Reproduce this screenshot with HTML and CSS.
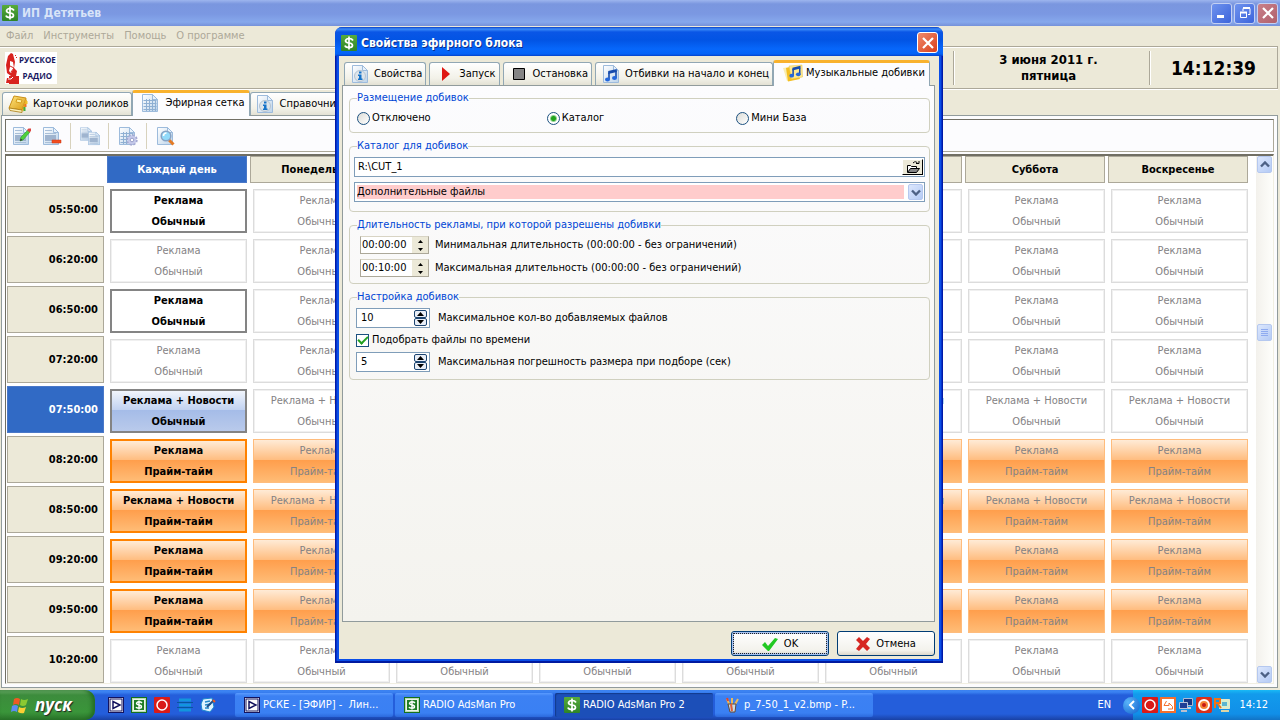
FILE: index.html
```html
<!DOCTYPE html>
<html lang="ru">
<head>
<meta charset="utf-8">
<title>ИП Детятьев</title>
<link rel="stylesheet" href="styles.css">
</head>
<body>
<svg class="sprite" aria-hidden="true">
  <defs>
    <linearGradient id="g-page" x1="0" y1="0" x2="1" y2="1"><stop offset="0" stop-color="#fff"/><stop offset="1" stop-color="#bcd3ea"/></linearGradient>
    <linearGradient id="g-green" x1="0" y1="0" x2="0" y2="1"><stop offset="0" stop-color="#58ab3b"/><stop offset="1" stop-color="#2d8427"/></linearGradient>
    <linearGradient id="g-gold" x1="0" y1="0" x2="1" y2="1"><stop offset="0" stop-color="#ffe680"/><stop offset="1" stop-color="#d99a12"/></linearGradient>
  </defs>
  <symbol id="dollar" viewBox="0 0 16 16"><rect width="16" height="16" rx="1" fill="url(#g-green)"/><path d="M12 5.500Q11 3.500 8 3.500T4.500 5.800Q4.500 7.700 8 8t3.500 2.500Q11.500 12.500 8 12.500T4 10.500M8 1.500v13" fill="none" stroke="#fff" stroke-width="1.700"/></symbol>
  <symbol id="dollar-old" viewBox="0 0 16 16"><rect width="16" height="16" fill="#16701c"/><rect x="1.500" y="1.500" width="13" height="13" fill="#e9f5e6" stroke="#b9dab5"/><rect x="3" y="3" width="10" height="10" fill="#1f7d25"/><path d="M11 6Q10 4.800 8 4.800T5.500 6.300Q5.500 7.600 8 8t2.500 1.700Q10.500 11.200 8 11.200T5 10M8 3.500v9" fill="none" stroke="#fff" stroke-width="1.400"/></symbol>
  <symbol id="page" viewBox="0 0 16 18"><path d="M.5.500h10l5 5v12H.500z" fill="url(#g-page)" stroke="#9dbbdc"/><path d="M10.500.500v5h5z" fill="#e9f2fb" stroke="#9dbbdc"/></symbol>
  <symbol id="info" viewBox="0 0 16 18"><use href="#page" width="16" height="18"/><circle cx="8" cy="11" r="5.500" fill="#dde4ea" stroke="#b5c3d0"/><path d="M7 6.500h2.500v2H7zM6 9.500h3.500v4h1v1.500H6v-1.500h1V11H6z" fill="#1673c9"/></symbol>
  <symbol id="grid" viewBox="0 0 16 18"><use href="#page" width="16" height="18"/><path d="M1.500 6.500h13M1.500 9.500h13M1.500 12.500h13M1.500 15.500h13M4.500 5v12M7.500 5v12M10.500 5v12M13.500 7v10" stroke="#8fb0d3"/></symbol>
  <symbol id="book" viewBox="0 0 20 18"><path d="M6 1l12 2-4 12L1 13z" fill="url(#g-gold)" stroke="#c98f18"/><path d="M1 13l13 2v2.500L2 15.500z" fill="#fff3bb" stroke="#a8780f" stroke-width=".8"/><path d="M9 4l5 1-1 3-5-1z" fill="#fff0a2" stroke="#d59d1e"/><path d="M14 15l4-12 1 3-4 11z" fill="#e4a820"/><path d="M18.500 6v3" stroke="#f2c028" stroke-width="2"/><path d="M17.500 9v3" stroke="#ee7221" stroke-width="2"/><path d="M16.500 12v4" stroke="#43ad3c" stroke-width="2"/></symbol>
  <symbol id="lines" viewBox="0 0 16 18"><use href="#page" width="16" height="18"/><path d="M2 3.500h7M2 6.500h11M2 15.500h11" stroke="#a9bfd8"/><rect x="2" y="8" width="11" height="6" fill="#9fb4cf"/></symbol>
  <symbol id="edit" viewBox="0 0 20 20"><use href="#lines" x="1" y="1" width="16" height="18"/><path d="M8 15l1-4 7-7 2 2-7 8z" fill="#4fd03a" stroke="#2c9a2c" stroke-width=".6"/><path d="M15 4l1.500-1.500H19V5l-1.500 1.500z" fill="#dc4641"/><path d="M8 15l.7-2.500L10.500 14z" fill="#333"/></symbol>
  <symbol id="remove" viewBox="0 0 20 20"><use href="#lines" x="1" y="1" width="16" height="18"/><path d="M10 14h9v3h-9z" fill="#f24d20" stroke="#ca3713" stroke-width=".5"/></symbol>
  <symbol id="copy" viewBox="0 0 20 20"><use href="#lines" x="0" y="1" width="12" height="14"/><use href="#lines" x="8" y="5" width="12" height="15"/></symbol>
  <symbol id="grid-gear" viewBox="0 0 20 20"><use href="#grid" x="1" y="1" width="16" height="18"/><circle cx="14" cy="14" r="4.500" fill="#c2c7e7" stroke="#a5a9d2" stroke-width="2.400" stroke-dasharray="2 1.500"/><circle cx="14" cy="14" r="4" fill="#c5c9ea"/><circle cx="14" cy="14" r="1.800" fill="#fff" stroke="#9a9fc9"/></symbol>
  <symbol id="find" viewBox="0 0 20 20"><use href="#page" x="1" y="1" width="16" height="18"/><path d="M13 14l4.500 4.500" stroke="#e47a25" stroke-width="3"/><circle cx="10" cy="10" r="4.800" fill="#92dafa" stroke="#86a2c4" stroke-width="1.500"/><path d="M7.500 10a3 3 0 0 1 3-3" stroke="#fff" stroke-width="1.500" fill="none"/></symbol>
  <symbol id="notes" viewBox="0 0 16 18"><path d="M6 7.500v7M13 6v7" stroke="#164bad" stroke-width="1.600"/><path d="M5.200 6l8.600-2v3L5.200 9z" fill="#164bad"/><ellipse cx="4.500" cy="14.500" rx="2.500" ry="2" fill="#2367dc"/><ellipse cx="11.500" cy="13" rx="2.500" ry="2" fill="#2367dc"/></symbol>
  <symbol id="music" viewBox="0 0 16 18"><use href="#page" width="16" height="18"/><use href="#notes" width="16" height="18"/></symbol>
  <symbol id="music-gold" viewBox="0 0 20 18"><path d="M0 4l12-2 3 13-11 2z" fill="#f9eeb0"/><path d="M3 4l9-2 5 13-12 2.500z" fill="#f4bf23"/><path d="M6 2l13-1 .500 12-11 2z" fill="#ffe88f" stroke="#e5c248" stroke-width=".5"/><use href="#notes" x="4" y="-2" width="16" height="17"/></symbol>
  <symbol id="play-box" viewBox="0 0 16 16"><rect x=".5" y=".5" width="15" height="15" fill="#fff" stroke="#13135f"/><rect x="2" y="2" width="12" height="12" fill="none" stroke="#13135f"/><path d="M5 4.500l7 3.500-7 3.500z" fill="#fff" stroke="#13135f" stroke-width="1.500"/></symbol>
  <symbol id="red-ring" viewBox="0 0 16 16"><rect width="16" height="16" rx="1" fill="#d91b18"/><circle cx="8" cy="8" r="5" fill="#d91b18" stroke="#fff" stroke-width="1.500"/></symbol>
  <symbol id="up" viewBox="0 0 7 4"><path d="M3.500 0L7 4H0z"/></symbol>
  <symbol id="down" viewBox="0 0 7 4"><path d="M0 0h7L3.500 4z"/></symbol>
  <symbol id="chev" viewBox="0 0 10 7"><path d="M1 1.500l4 4 4-4" fill="none" stroke="#4d6185" stroke-width="2.400"/></symbol>
  <symbol id="cross" viewBox="0 0 12 12"><path d="M1 1l10 10M11 1L1 11" stroke="#fff" stroke-width="2.200"/></symbol>
</svg>

<main class="app">
  <header class="app-title">
    <svg width="16" height="16"><use href="#dollar"/></svg>
    <h1>ИП Детятьев</h1>
    <div class="caption-buttons">
      <button type="button" aria-label="Свернуть"><svg width="12" height="12"><path d="M1 8h7v3H1z" fill="#fff"/></svg></button>
      <button type="button" aria-label="Восстановить"><svg width="12" height="12" fill="none" stroke="#fff"><path d="M4 4V1.500h7v6H9"/><path d="M4 1h7" stroke-width="2"/><path d="M1.500 5.500h6v5h-6z"/><path d="M1 5.500h7" stroke-width="2"/></svg></button>
      <button type="button" class="close-dim" aria-label="Закрыть"><svg width="12" height="12"><use href="#cross"/></svg></button>
    </div>
  </header>

  <nav class="menu">
    <button type="button">Файл</button><button type="button">Инструменты</button><button type="button">Помощь</button><button type="button">О программе</button>
  </nav>

  <section class="banner">
    <div class="logo">
      <svg width="14" height="32" aria-hidden="true">
        <path d="M6 1l2 1 2 8-1 6 3 3-1 5H6l-4-3-1-8L3 4zM4 24h10v8H4zM1 31l1-5h2v5z" fill="#d8231f"/>
        <path d="M5 9l3 1 1 6-3 5-2-2 1-4z" fill="#fff"/>
        <path d="M10 3h1v1h-1zM11 5h1v1h-1z" fill="#d8231f"/>
        <path d="M5 14l4 2-3 4" fill="none" stroke="#d8231f"/><path d="M3 27h3l2-2" fill="none" stroke="#fff"/>
      </svg>
      <span class="logo-text">РУССКОЕ<br>РАДИО</span>
    </div>
    <div class="date">3 июня 2011 г.<br>пятница</div>
    <time class="clock">14:12:39</time>
  </section>

  <div class="tabs main-tabs" role="tablist">
    <button type="button" role="tab" class="tab"><svg width="20" height="18"><use href="#book"/></svg>Карточки роликов</button>
    <button type="button" role="tab" class="tab active" aria-selected="true"><svg width="16" height="18"><use href="#grid"/></svg>Эфирная сетка</button>
    <button type="button" role="tab" class="tab"><svg width="16" height="18"><use href="#info"/></svg>Справочники</button>
  </div>

  <section class="main-page">
    <div class="toolbar">
      <button type="button" aria-label="Изменить"><svg width="20" height="20"><use href="#edit"/></svg></button>
      <button type="button" aria-label="Удалить"><svg width="20" height="20"><use href="#remove"/></svg></button>
      <i></i>
      <button type="button" aria-label="Копировать"><svg width="20" height="20"><use href="#copy"/></svg></button>
      <i></i>
      <button type="button" aria-label="Настройка сетки"><svg width="20" height="20"><use href="#grid-gear"/></svg></button>
      <i></i>
      <button type="button" aria-label="Найти"><svg width="20" height="20"><use href="#find"/></svg></button>
    </div>
    <div class="schedule">
      <div class="schedule-view">
        <table>
          <colgroup><col class="time-col"><col span="8"></colgroup>
          <thead><tr><td></td><th class="selected">Каждый день</th><th>Понедельник</th><th>Вторник</th><th>Среда</th><th>Четверг</th><th>Пятница</th><th>Суббота</th><th>Воскресенье</th></tr></thead>
          <tbody id="rows"></tbody>
        </table>
      </div>
      <div class="scrollbar" aria-hidden="true">
        <span class="scroll-btn"><svg class="flip" width="10" height="7"><use href="#chev"/></svg></span>
        <span class="space-above"></span>
        <span class="scroll-btn"><svg width="8" height="8"><path d="M0 .5h7M0 2.500h7M0 4.500h7M0 6.500h7" stroke="#8fabf0"/></svg></span>
        <span class="space-below"></span>
        <span class="scroll-btn"><svg width="10" height="7"><use href="#chev"/></svg></span>
      </div>
    </div>
  </section>
</main>

<section class="dialog" role="dialog" aria-labelledby="dialog-title">
  <header class="dialog-title">
    <svg width="16" height="16"><use href="#dollar"/></svg>
    <h2 id="dialog-title">Свойства эфирного блока</h2>
    <button type="button" class="close" aria-label="Закрыть"><svg width="12" height="12"><use href="#cross"/></svg></button>
  </header>
  <form class="dialog-body">
    <div class="tabs" role="tablist">
      <button type="button" role="tab" class="tab"><svg width="16" height="18"><use href="#info"/></svg>Свойства</button>
      <button type="button" role="tab" class="tab"><svg width="16" height="18"><path d="M5 2l8 7-8 7z" fill="#df1713"/></svg>Запуск</button>
      <button type="button" role="tab" class="tab"><svg width="16" height="18"><path d="M2.500 3.500h11v11h-11z" fill="#858585" stroke="#000"/></svg>Остановка</button>
      <button type="button" role="tab" class="tab"><svg width="16" height="18"><use href="#music"/></svg>Отбивки на начало и конец</button>
      <button type="button" role="tab" class="tab active" aria-selected="true"><svg width="20" height="18"><use href="#music-gold"/></svg>Музыкальные добивки</button>
    </div>
    <div class="dialog-page">
      <fieldset class="placement">
        <legend>Размещение добивок</legend>
        <label><input type="radio" name="place">Отключено</label>
        <label><input type="radio" name="place" checked>Каталог</label>
        <label><input type="radio" name="place">Мини База</label>
      </fieldset>
      <fieldset class="catalog">
        <legend>Каталог для добивок</legend>
        <div class="path">
          <input type="text" value="R:\CUT_1" aria-label="Каталог">
          <button type="button" aria-label="Обзор"><svg width="16" height="14" fill="none" stroke="#000"><path d="M2.500 12V5.500h3l1 1h5v2" fill="#fff"/><path d="M2.500 12.500l3-4h9l-3 4z" fill="#858585"/><path d="M8 3q3-3 5 1M11 3.500h3V1"/></svg></button>
        </div>
        <div class="combo">
          <select aria-label="Файлы"><option>Дополнительные файлы</option></select>
          <span class="combo-arrow"><svg width="10" height="7"><use href="#chev"/></svg></span>
        </div>
      </fieldset>
      <fieldset class="durations">
        <legend>Длительность рекламы, при которой разрешены добивки</legend>
        <div class="line">
          <span class="time-spin"><input type="text" id="min" value="00:00:00"><span class="steps"><button type="button" aria-label="Больше"><svg width="5" height="3"><use href="#up"/></svg></button><button type="button" aria-label="Меньше"><svg width="5" height="3"><use href="#down"/></svg></button></span></span>
          <label for="min">Минимальная длительность (00:00:00 - без ограничений)</label>
        </div>
        <div class="line">
          <span class="time-spin"><input type="text" id="max" value="00:10:00"><span class="steps"><button type="button" aria-label="Больше"><svg width="5" height="3"><use href="#up"/></svg></button><button type="button" aria-label="Меньше"><svg width="5" height="3"><use href="#down"/></svg></button></span></span>
          <label for="max">Максимальная длительность (00:00:00 - без ограничений)</label>
        </div>
      </fieldset>
      <fieldset class="setup">
        <legend>Настройка добивок</legend>
        <div class="line">
          <span class="num-spin"><input type="text" id="count" value="10"><span class="steps"><button type="button" aria-label="Больше"><svg width="7" height="4"><use href="#up"/></svg></button><button type="button" aria-label="Меньше"><svg width="7" height="4"><use href="#down"/></svg></button></span></span>
          <label for="count">Максимальное кол-во добавляемых файлов</label>
        </div>
        <label class="check"><input type="checkbox" checked>Подобрать файлы по времени</label>
        <div class="line">
          <span class="num-spin"><input type="text" id="error" value="5"><span class="steps"><button type="button" aria-label="Больше"><svg width="7" height="4"><use href="#up"/></svg></button><button type="button" aria-label="Меньше"><svg width="7" height="4"><use href="#down"/></svg></button></span></span>
          <label for="error">Максимальная погрешность размера при подборе (сек)</label>
        </div>
      </fieldset>
    </div>
    <div class="actions">
      <button type="button" class="default"><svg width="16" height="14"><path d="M0 8l3-3 3 4 7-8 3 1-9 12H6z" fill="#22c922"/></svg>OK</button>
      <button type="button"><svg width="14" height="14"><path d="M0 3l3-3 4 4 4-4 3 2-4 5 4 4-3 3-4-4-4 4-3-2 4-5z" fill="#d62722"/></svg>Отмена</button>
    </div>
  </form>
</section>

<footer class="taskbar">
  <button type="button" class="start">
    <svg width="18" height="18"><path d="M3 3q3-2 6 0L8 9q-3-2-6 0z" fill="#ee5a24"/><path d="M10 3q3 2 7 0l-2 6q-3 2-6 0z" fill="#8bc932"/><path d="M1 10q3-2 6 0l-1 6q-3-2-6 0z" fill="#5c8df2"/><path d="M8 11q3 2 7 0l-2 6q-3 1-6-1z" fill="#fbcf34"/></svg>пуск
  </button>
  <div class="quick">
    <button type="button" aria-label="Эфир"><svg width="16" height="16"><use href="#play-box"/></svg></button>
    <button type="button" aria-label="RADIO AdsMan"><svg width="16" height="16"><use href="#dollar-old"/></svg></button>
    <button type="button" aria-label="Запись"><svg width="16" height="16"><use href="#red-ring"/></svg></button>
    <button type="button" aria-label="База"><svg width="16" height="16"><path d="M2 3h12M2 8h12M2 13h12" stroke="#1296dd" stroke-width="3"/><path d="M0 5.500h16M0 10.500h16" stroke="#07569f"/></svg></button>
    <button type="button" aria-label="Рабочий стол"><svg width="16" height="16"><path d="M3 2l9-1 2 9-4 5-8-2-1-6z" fill="#dff3ff" stroke="#1c86cf"/><path d="M5 5l5-1M5 8l6-1M5 11l4 0" stroke="#2488c9" stroke-width="1.500"/><path d="M7 10l7-7" stroke="#1f4f88" stroke-width="2"/><path d="M13 3l2 2" stroke="#ee5c24" stroke-width="2"/></svg></button>
  </div>
  <div class="tasks">
    <button type="button"><svg width="16" height="16"><use href="#play-box"/></svg>РСКЕ - [ЭФИР] -&nbsp; Лин...</button>
    <button type="button"><svg width="16" height="16"><use href="#dollar-old"/></svg>RADIO AdsMan Pro</button>
    <button type="button" class="pressed"><svg width="16" height="16"><use href="#dollar"/></svg>RADIO AdsMan Pro 2</button>
    <button type="button"><svg width="16" height="16"><path d="M6 9L3 2M8 9V1M10 9l4-7" stroke="#e9b95c" stroke-width="2"/><path d="M3 1l1 3" stroke="#e2432d" stroke-width="2"/><path d="M4 7h8l-1 8H6z" fill="#c9dbe5" stroke="#634838"/><path d="M7 7l1 7" stroke="#df5936" stroke-width="2"/></svg>p_7-50_1_v2.bmp - P...</button>
  </div>
  <span class="lang">EN</span>
  <div class="tray">
    <button type="button" class="expand" aria-label="Показать значки"><svg width="8" height="10"><path d="M6 1L2 5l4 4" fill="none" stroke="#fff" stroke-width="2"/></svg></button>
    <svg width="16" height="16"><use href="#red-ring"/></svg>
    <svg width="16" height="16"><path d="M0 0h16v16H0z" fill="#f3702e"/><path d="M2 2h12v12H2z" fill="#fff"/><path d="M6.500 4L4 8.500h5V6l3.500 3.500V12H8" fill="none" stroke="#f3702e"/></svg>
    <svg width="16" height="16"><path d="M5.500 1.500h9v7h-9z" fill="#173785" stroke="#aeb9d2"/><path d="M8 10h5v2H8z" fill="#c8cdd9"/><path d="M1.500 5.500h8v6h-8z" fill="#1f3f97" stroke="#b9c5da"/><path d="M3 13h6v2H3z" fill="#b9bfce"/></svg>
    <svg width="16" height="16"><rect width="16" height="16" rx="2" fill="#d9301c"/><circle cx="8" cy="8" r="5" fill="#f58535" stroke="#fff" stroke-width="2"/><circle cx="8" cy="8" r="2" fill="#c71716"/></svg>
    <svg width="16" height="16"><path d="M5.500 2.500h10v9h-10z" fill="#d7efcf" stroke="#e9e6c8"/><path d="M8 5h5v4H8z" fill="#5bb5d1"/><path d="M7 13h8v2H7z" fill="#ddd5a6"/><path d="M1 11V2h5v4H2M4 7l3 4" fill="none" stroke="#f07317" stroke-width="2"/></svg>
    <time>14:12</time>
  </div>
</footer>
<script src="rows.js"></script>
</body>
</html>
```

FILE: styles.css
```css
* { box-sizing: border-box; }
html, body { height: 100%; }
body {
  margin: 0;
  display: flex;
  flex-direction: column;
  position: relative;
  overflow: hidden;
  background: #ece9d8;
  color: #000;
  font: 11px/14px "DejaVu Sans Condensed", "DejaVu Sans", sans-serif;
}
button, input, select { font: inherit; color: inherit; margin: 0; }
button { border: 0; padding: 0; background: none; }
svg { display: block; flex: none; }
h1, h2 { margin: 0; }
.sprite { position: absolute; width: 0; height: 0; }

.app { flex: 1; min-height: 0; display: flex; flex-direction: column; }
.app-title {
  display: flex;
  align-items: center;
  gap: 4px;
  height: 26px;
  padding: 0 2px;
  background: linear-gradient(#9db5ee 0, #7a96df 4px, #7b98e2 14px, #86a8ec 22px, #7591da);
}
.app-title h1 { flex: 1; font-size: 12px; line-height: 16px; color: #d8e4f8; }
.caption-buttons { display: flex; gap: 2px; }
.caption-buttons button, .close {
  display: grid;
  place-items: center;
  width: 21px;
  height: 21px;
  border: 1px solid #c3d0f3;
  border-radius: 3px;
  background: linear-gradient(135deg, #6f93ee, #3c64db);
}
.caption-buttons .close-dim { background: linear-gradient(135deg, #c98089, #b0606c); }

.menu { display: flex; gap: 10px; height: 20px; padding: 0 6px; color: #aca899; }
.banner {
  display: flex;
  align-items: center;
  height: 43px;
  margin-right: 2px;
  padding-left: 5px;
  border: 1px solid #aca899;
  border-left: 0;
  box-shadow: 0 1px #fff, inset 0 1px #fff;
}
.logo { display: flex; height: 32px; margin-right: auto; padding-right: 1px; background: #fff; }
.logo-text { color: #19195f; font: bold 8px/16px "Liberation Sans Narrow", "Open Sans", sans-serif; text-align: center; }
.date, .clock { display: grid; place-items: center; height: 34px; border-left: 1px solid #aca899; box-shadow: inset 1px 0 #fff; font-weight: bold; }
.date { width: 196px; padding-right: 6px; text-align: center; font-size: 13px; line-height: 16px; }
.clock { width: 128px; font-size: 19px; line-height: 24px; }

.tabs { display: flex; align-items: flex-end; }
.tab {
  display: flex;
  align-items: center;
  gap: 6px;
  height: 23px;
  padding: 0 3px 0 7px;
  border: 1px solid #91a7b4;
  border-bottom: 0;
  border-radius: 3px 3px 0 0;
  background: linear-gradient(#fff, #f2f1e8 70%, #e3e1d4);
  white-space: nowrap;
}
.tab.active {
  position: relative;
  height: 26px;
  margin-bottom: -1px;
  padding-bottom: 3px;
  border-top: 3px solid #f9b22d;
  background: #fcfcfe;
}
.main-tabs { height: 26px; padding-left: 2px; }
.main-tabs .tab:first-child { padding: 0 2px 0 5px; gap: 5px; }
.main-tabs .active { padding: 0 4px 3px 9px; gap: 8px; }
.main-tabs .tab:last-child { gap: 7px; padding-left: 6px; }

.main-page {
  flex: 1;
  min-height: 0;
  display: flex;
  flex-direction: column;
  gap: 2px;
  margin: 0 2px 2px 1px;
  padding: 3px;
  border: 1px solid #919b9c;
  background: #fcfcfe;
}
.toolbar {
  display: flex;
  align-items: center;
  gap: 10px;
  height: 33px;
  padding-left: 6px;
  border: 1px solid #aca899;
  border-top-color: #716f64;
  border-left-color: #716f64;
}
.toolbar i { width: 1px; height: 26px; margin: 0 -2px; background: #d8d2bd; }
.toolbar i + button { margin-left: 1px; }
.schedule {
  flex: 1;
  min-height: 0;
  display: flex;
  border: 1px solid #f1efe2;
  border-top: 2px solid #716f64;
  border-left: 1px solid #716f64;
  background: #fff;
}
.schedule-view { flex: 1; min-width: 0; overflow: hidden; padding-right: 6px; }
table { width: calc(100% + 3px); table-layout: fixed; border-spacing: 3px; margin: -3px 0 0 -2px; }
.time-col { width: 97px; }
th { height: 27px; padding: 0; border: 1px solid #aca899; background: #ece9d8; font-weight: bold; }
tbody th { height: 47px; padding-right: 5px; text-align: right; }
th.selected { background: #316ac5; border-color: #4a78c8; color: #fff; }
td { padding: 3px 0 0 3px; }
.slot {
  display: flex;
  flex-direction: column;
  justify-content: center;
  height: 44px;
  border: 1px solid #dcdcdc;
  box-shadow: inset 0 0 0 1px #f0f0f0;
  background: #fff;
  color: #848284;
  line-height: 21px;
  text-align: center;
  white-space: nowrap;
}
.slot.prime { border-color: #ffbc7c; box-shadow: none; background: linear-gradient(#ffebd6, #ffbd80 47%, #ff9e4c 48%, #ffbc76); }
.slot.strong { border: 2px solid #848484; box-shadow: none; color: #000; font-weight: bold; }
.slot.prime.strong { border-color: #ff8200; }
.slot.current { background: linear-gradient(#f1f5fc, #c1d2f1 47%, #a5bce8 48%, #b9caeb); }

.scrollbar { width: 17px; padding-left: 1px; display: flex; flex-direction: column; background: linear-gradient(90deg, #f3f1ec, #fefefb); }
.scroll-btn, .combo-arrow {
  display: grid;
  place-items: center;
  width: 15px;
  height: 17px;
  border: 1px solid #b5c8ef;
  border-radius: 2px;
  background: linear-gradient(135deg, #dce7fd, #b5cbf5);
}
.flip { transform: rotate(180deg); }
.space-above { flex: 152; }
.space-below { flex: 327; }

.dialog {
  position: absolute;
  top: 27px;
  left: 335px;
  bottom: 57px;
  width: 608px;
  display: flex;
  flex-direction: column;
  padding: 0 4px 4px;
  border-radius: 7px 7px 0 0;
  background: linear-gradient(90deg, #0019a8 1px, #0a4ee8 2px, #0a4ee8 calc(100% - 2px), #0019a8 calc(100% - 1px));
  box-shadow: inset 0 -2px #001a9f;
}
.dialog-title {
  display: flex;
  align-items: center;
  gap: 4px;
  height: 29px;
  margin: 0 -4px;
  padding: 2px 5px 0 6px;
  border-radius: 7px 7px 0 0;
  background: linear-gradient(#0a3fc4 0, #3c8cf8 2px, #0a56e6 5px, #0254e4 13px, #0767fb 22px, #0362f6 27px, #0441c8);
}
.dialog-title h2 { flex: 1; font-size: 12px; line-height: 16px; color: #fff; text-shadow: 1px 1px #0b2f8d; }
.close { border-color: #fff; background: linear-gradient(135deg, #f08a6c, #d9401c); }
.dialog-body { flex: 1; min-height: 0; display: flex; flex-direction: column; padding: 3px 4px 3px 3px; background: #ece9d8; }
.dialog-body > .tabs { height: 26px; padding-left: 2px; gap: 3px; }
.dialog-body .active { margin-left: -3px; padding: 0 4px 3px 9px; gap: 3px; }
.dialog-page {
  flex: 1;
  min-height: 0;
  display: flex;
  flex-direction: column;
  gap: 6px;
  padding: 5px 4px 6px 6px;
  border: 1px solid #919b9c;
  background: linear-gradient(#fcfcfe, #f4f3ee);
}
fieldset { min-width: 0; margin: 0; padding: 0 5px; border: 1px solid #d0d0bf; border-radius: 4px; }
legend { padding: 0; color: #0046d5; }
input[type="text"] { min-width: 0; border: 0; padding: 0; outline: 0; background: #fff; }
.placement { display: grid; grid-template-columns: 1fr 1fr 1fr; height: 42px; padding: 0 3px 0 7px; }
.placement label { display: flex; align-items: center; gap: 2px; height: 26px; }
input[type="radio"] {
  appearance: none;
  width: 13px;
  height: 13px;
  border: 1px solid #1c5180;
  border-radius: 50%;
  background: linear-gradient(135deg, #dcdcd7, #fff);
}
input[type="radio"]:checked { background: radial-gradient(circle, #22a41f 2px, #fff 4px); }

.catalog { height: 73px; padding: 4px 4px 0; }
.catalog legend { margin-left: 3px; }
.path, .combo { display: flex; height: 20px; border: 1px solid #7f9db9; background: #fff; }
.path input { flex: 1; padding-left: 3px; }
.path button { display: grid; place-items: center; width: 21px; margin: 1px; background: #ece9d8; border: 1px solid #000; border-top-color: #fff; border-left-color: #fff; }
.combo { position: relative; margin-top: 5px; padding: 2px; }
.combo select { appearance: none; flex: 1; border: 0; padding: 0; outline: 0; background: linear-gradient(#ffcccc, #ffcccc) no-repeat 0 0 / calc(100% - 18px) 100%; }
.combo-arrow { position: absolute; right: 1px; top: 1px; height: 16px; pointer-events: none; }

.line { display: flex; align-items: center; }
.steps { display: flex; flex-direction: column; }
.steps button { flex: 1; display: grid; place-items: center; }
.durations { height: 66px; padding: 4px 10px 0; }
.durations legend { margin-left: -3px; }
.durations .line { gap: 6px; margin-bottom: 5px; }
.time-spin { display: flex; width: 69px; height: 18px; background: #fff; border: 1px solid #aca899; border-top-color: #d8d4c4; }
.time-spin input { flex: 1; padding-left: 1px; }
.time-spin .steps { width: 16px; background: #ece9d8; }
.setup { height: 90px; padding: 4px 6px 0; }
.setup legend { margin-left: 1px; }
.setup .line { gap: 8px; }
.num-spin { display: flex; width: 74px; height: 20px; padding: 1px 2px; border: 1px solid #7f9db9; background: #fff; }
.num-spin input { flex: 1; padding-left: 2px; }
.num-spin .steps { width: 13px; }
.num-spin .steps button { border: 1px solid #1c4470; border-radius: 2px; background: #e9eef6; }
.check { display: flex; align-items: center; gap: 3px; height: 24px; }
input[type="checkbox"] {
  appearance: none;
  display: grid;
  place-items: center;
  width: 13px;
  height: 13px;
  border: 1px solid #1c5180;
  background: #fff;
}
input[type="checkbox"]:checked::before { content: ""; width: 8px; height: 4px; border: solid #21a121; border-width: 0 0 2px 2px; transform: rotate(-45deg); margin-bottom: 3px; }

.actions { display: flex; justify-content: flex-end; gap: 8px; padding-top: 9px; }
.actions button {
  display: flex;
  align-items: center;
  justify-content: center;
  gap: 6px;
  width: 98px;
  height: 25px;
  border: 1px solid #003c74;
  border-radius: 3px;
  background: linear-gradient(#fff, #f3f2ec 80%, #dcd7cb);
}
.actions .default { box-shadow: inset 0 0 0 2px #a9c3f0; outline: 1px dotted #222; outline-offset: -3px; }

.taskbar {
  display: flex;
  align-items: center;
  height: 30px;
  background: linear-gradient(#3c81f0 0, #3b83f2 2px, #245edb 5px, #245edb 24px, #1941a5);
  color: #fff;
}
.start {
  display: flex;
  align-items: center;
  gap: 6px;
  width: 95px;
  height: 30px;
  padding-left: 11px;
  border-radius: 0 10px 10px 0;
  background: linear-gradient(#71b16f 0, #3c8c3c 5px, #3a953a 22px, #2b742b);
  box-shadow: inset -3px 0 4px #236c23;
  font: italic bold 17px/20px "Open Sans", "Noto Sans", sans-serif;
  text-shadow: 1px 1px 1px #222;
}
.quick { display: flex; gap: 7px; width: 140px; padding-left: 13px; }
.tasks { flex: 1; display: flex; gap: 2px; }
.tasks button {
  display: flex;
  align-items: center;
  gap: 3px;
  flex: 0 1 158px;
  height: 24px;
  padding-left: 9px;
  border-radius: 2px;
  background: linear-gradient(#5a9bff, #3c81f3 3px, #3a80f3 20px, #2c69dc);
  white-space: nowrap;
}
.tasks .pressed { background: #1c4fb8; box-shadow: inset 1px 1px 1px #133a8c; }
.tasks button:last-child { gap: 4px; }
.lang { width: 27px; }
.tray {
  display: flex;
  align-items: center;
  gap: 2px;
  height: 30px;
  margin-left: 9px;
  padding-right: 12px;
  background: linear-gradient(#19b9f6, #129bec 4px, #118fe8 24px, #1273c5);
}
.expand { display: grid; place-items: center; width: 17px; height: 17px; margin-left: -10px; border-radius: 50%; background: radial-gradient(circle at 30% 30%, #5ab5fa, #1161cd); }
.tray time { margin-left: 7px; }
```

FILE: rows.js
```js
const times = ["05:50:00", "06:20:00", "06:50:00", "07:20:00", "07:50:00", "08:20:00", "08:50:00", "09:20:00", "09:50:00", "10:20:00"];
const news = new Set(["07:50:00", "08:50:00"]);
const prime = new Set(["08:20:00", "08:50:00", "09:20:00", "09:50:00"]);
const inactive = new Set(["06:20:00", "07:20:00", "10:20:00"]);
const current = "07:50:00";

document.getElementById("rows").innerHTML = times.map((time) => {
  let cells = "";
  for (let day = 0; day < 8; day++) {
    const daily = day === 0 && !inactive.has(time);
    const names = ["slot"];
    if (prime.has(time)) names.push("prime");
    if (daily) names.push("strong");
    if (daily && time === current) names.push("current");
    cells += `<td><div class="${names.join(" ")}"><span>${news.has(time) ? "Реклама + Новости" : "Реклама"}</span><span>${prime.has(time) ? "Прайм-тайм" : "Обычный"}</span></div></td>`;
  }
  return `<tr><th class="${time === current ? "selected" : ""}">${time}</th>${cells}</tr>`;
}).join("");
```
